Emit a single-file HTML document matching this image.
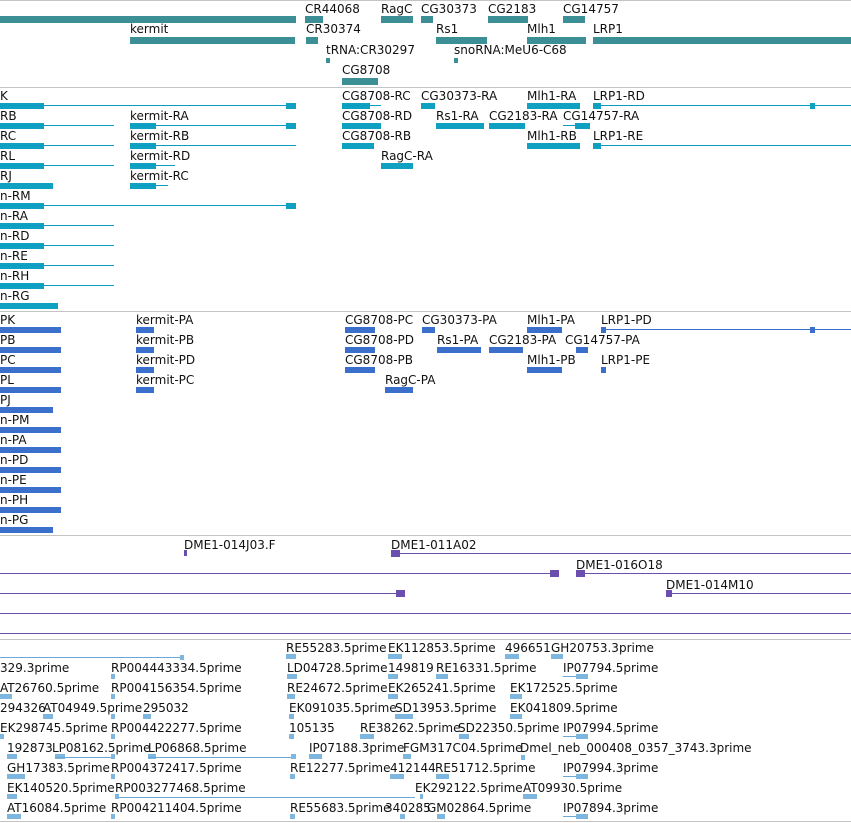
<!DOCTYPE html>
<html><head><meta charset="utf-8"><style>
body{margin:0;width:851px;height:823px;background:#fff;position:relative;overflow:hidden;font-family:"DejaVu Sans","Liberation Sans",sans-serif}
.t{position:absolute;font-size:12px;line-height:14px;color:#111;white-space:nowrap}
.s{position:absolute;left:0;width:851px;height:1px;background:#c4c4c4}
.g{position:absolute;height:7px;background:#3d8f96}
.a{position:absolute;height:6px;background:#0fa0c2}
.al{position:absolute;height:1px;background:#0a9cc0}
.p{position:absolute;height:6px;background:#3a6fcc}
.pl{position:absolute;height:1px;background:#3a6fcc}
.c{position:absolute;height:1px;background:#6a4fae}
.ca{position:absolute;height:7px;width:9px;background:#6a4fae}
.e{position:absolute;height:5px;background:#7db6de}
.el{position:absolute;height:1px;background:#6aa8d8}
</style></head><body>
<div class="s" style="top:0"></div><div class="s" style="top:87px"></div><div class="s" style="top:311px"></div><div class="s" style="top:535px"></div><div class="s" style="top:639px"></div><div class="s" style="top:821px"></div>

<div class="g" style="left:0;top:16px;width:296px"></div>
<div class="t" style="left:305px;top:2px">CR44068</div><div class="g" style="left:305px;top:16px;width:18px"></div>
<div class="t" style="left:381px;top:2px">RagC</div><div class="g" style="left:381px;top:16px;width:32px"></div>
<div class="t" style="left:421px;top:2px">CG30373</div><div class="g" style="left:421px;top:16px;width:12px"></div>
<div class="t" style="left:488px;top:2px">CG2183</div><div class="g" style="left:488px;top:16px;width:40px"></div>
<div class="t" style="left:563px;top:2px">CG14757</div><div class="g" style="left:563px;top:16px;width:22px"></div>
<div class="t" style="left:130px;top:22px">kermit</div><div class="g" style="left:130px;top:37px;width:165px"></div>
<div class="t" style="left:306px;top:22px">CR30374</div><div class="g" style="left:306px;top:37px;width:12px"></div>
<div class="t" style="left:436px;top:22px">Rs1</div><div class="g" style="left:436px;top:37px;width:51px"></div>
<div class="t" style="left:527px;top:22px">Mlh1</div><div class="g" style="left:527px;top:37px;width:59px"></div>
<div class="t" style="left:593px;top:22px">LRP1</div><div class="g" style="left:593px;top:37px;width:258px"></div>
<div class="t" style="left:326px;top:43px">tRNA:CR30297</div><div class="g" style="left:326px;top:58px;width:4px;height:5px"></div>
<div class="t" style="left:454px;top:43px">snoRNA:MeU6-C68</div><div class="g" style="left:454px;top:58px;width:4px;height:5px"></div>
<div class="t" style="left:342px;top:63px">CG8708</div><div class="g" style="left:342px;top:78px;width:36px"></div>

<div class="t" style="left:0;top:89px">K</div><div class="a" style="left:0;top:103px;width:44px"></div><div class="al" style="left:0;top:105px;width:295px"></div><div class="a" style="left:286px;top:103px;width:10px"></div>
<div class="t" style="left:0;top:109px">RB</div><div class="a" style="left:0;top:123px;width:44px"></div><div class="al" style="left:0;top:125px;width:114px"></div>
<div class="t" style="left:0;top:129px">RC</div><div class="a" style="left:0;top:143px;width:44px"></div><div class="al" style="left:0;top:145px;width:114px"></div>
<div class="t" style="left:0;top:149px">RL</div><div class="a" style="left:0;top:163px;width:44px"></div><div class="al" style="left:0;top:165px;width:114px"></div>
<div class="t" style="left:0;top:169px">RJ</div><div class="a" style="left:0;top:183px;width:53px"></div>
<div class="t" style="left:0;top:189px">n-RM</div><div class="a" style="left:0;top:203px;width:44px"></div><div class="al" style="left:0;top:205px;width:295px"></div><div class="a" style="left:286px;top:203px;width:10px"></div>
<div class="t" style="left:0;top:209px">n-RA</div><div class="a" style="left:0;top:223px;width:44px"></div><div class="al" style="left:0;top:225px;width:114px"></div>
<div class="t" style="left:0;top:229px">n-RD</div><div class="a" style="left:0;top:243px;width:44px"></div><div class="al" style="left:0;top:245px;width:114px"></div>
<div class="t" style="left:0;top:249px">n-RE</div><div class="a" style="left:0;top:263px;width:44px"></div><div class="al" style="left:0;top:265px;width:114px"></div>
<div class="t" style="left:0;top:269px">n-RH</div><div class="a" style="left:0;top:283px;width:44px"></div><div class="al" style="left:0;top:285px;width:114px"></div>
<div class="t" style="left:0;top:289px">n-RG</div><div class="a" style="left:0;top:303px;width:58px"></div>
<div class="t" style="left:130px;top:109px">kermit-RA</div><div class="a" style="left:130px;top:123px;width:26px"></div><div class="al" style="left:130px;top:125px;width:165px"></div><div class="a" style="left:286px;top:123px;width:10px"></div>
<div class="t" style="left:130px;top:129px">kermit-RB</div><div class="a" style="left:130px;top:143px;width:26px"></div><div class="al" style="left:130px;top:145px;width:166px"></div>
<div class="t" style="left:130px;top:149px">kermit-RD</div><div class="a" style="left:130px;top:163px;width:26px"></div><div class="al" style="left:130px;top:165px;width:45px"></div>
<div class="t" style="left:130px;top:169px">kermit-RC</div><div class="a" style="left:130px;top:183px;width:26px"></div><div class="al" style="left:130px;top:185px;width:38px"></div>
<div class="t" style="left:342px;top:89px">CG8708-RC</div><div class="a" style="left:342px;top:103px;width:28px"></div><div class="al" style="left:342px;top:105px;width:39px"></div>
<div class="t" style="left:421px;top:89px">CG30373-RA</div><div class="a" style="left:421px;top:103px;width:14px"></div>
<div class="t" style="left:527px;top:89px">Mlh1-RA</div><div class="a" style="left:527px;top:103px;width:53px"></div>
<div class="t" style="left:593px;top:89px">LRP1-RD</div><div class="a" style="left:593px;top:103px;width:8px"></div><div class="al" style="left:593px;top:105px;width:258px"></div><div class="a" style="left:810px;top:103px;width:5px"></div>
<div class="t" style="left:342px;top:109px">CG8708-RD</div><div class="a" style="left:342px;top:123px;width:39px"></div>
<div class="t" style="left:436px;top:109px">Rs1-RA</div><div class="a" style="left:436px;top:123px;width:48px"></div>
<div class="t" style="left:489px;top:109px">CG2183-RA</div><div class="a" style="left:489px;top:123px;width:36px"></div>
<div class="t" style="left:563px;top:109px">CG14757-RA</div><div class="al" style="left:563px;top:125px;width:27px"></div><div class="a" style="left:575px;top:123px;width:15px"></div>
<div class="t" style="left:342px;top:129px">CG8708-RB</div><div class="a" style="left:342px;top:143px;width:32px"></div>
<div class="t" style="left:527px;top:129px">Mlh1-RB</div><div class="a" style="left:527px;top:143px;width:53px"></div>
<div class="t" style="left:593px;top:129px">LRP1-RE</div><div class="a" style="left:593px;top:143px;width:8px"></div><div class="al" style="left:593px;top:145px;width:258px"></div>
<div class="t" style="left:381px;top:149px">RagC-RA</div><div class="a" style="left:381px;top:163px;width:32px"></div>

<div class="t" style="left:0;top:313px">PK</div><div class="p" style="left:0;top:327px;width:61px"></div>
<div class="t" style="left:0;top:333px">PB</div><div class="p" style="left:0;top:347px;width:61px"></div>
<div class="t" style="left:0;top:353px">PC</div><div class="p" style="left:0;top:367px;width:61px"></div>
<div class="t" style="left:0;top:373px">PL</div><div class="p" style="left:0;top:387px;width:61px"></div>
<div class="t" style="left:0;top:393px">PJ</div><div class="p" style="left:0;top:407px;width:53px"></div>
<div class="t" style="left:0;top:413px">n-PM</div><div class="p" style="left:0;top:427px;width:61px"></div>
<div class="t" style="left:0;top:433px">n-PA</div><div class="p" style="left:0;top:447px;width:61px"></div>
<div class="t" style="left:0;top:453px">n-PD</div><div class="p" style="left:0;top:467px;width:61px"></div>
<div class="t" style="left:0;top:473px">n-PE</div><div class="p" style="left:0;top:487px;width:61px"></div>
<div class="t" style="left:0;top:493px">n-PH</div><div class="p" style="left:0;top:507px;width:61px"></div>
<div class="t" style="left:0;top:513px">n-PG</div><div class="p" style="left:0;top:527px;width:53px"></div>
<div class="t" style="left:136px;top:313px">kermit-PA</div><div class="p" style="left:136px;top:327px;width:18px"></div>
<div class="t" style="left:136px;top:333px">kermit-PB</div><div class="p" style="left:136px;top:347px;width:18px"></div>
<div class="t" style="left:136px;top:353px">kermit-PD</div><div class="p" style="left:136px;top:367px;width:18px"></div>
<div class="t" style="left:136px;top:373px">kermit-PC</div><div class="p" style="left:136px;top:387px;width:18px"></div>
<div class="t" style="left:345px;top:313px">CG8708-PC</div><div class="p" style="left:345px;top:327px;width:30px"></div>
<div class="t" style="left:422px;top:313px">CG30373-PA</div><div class="p" style="left:422px;top:327px;width:13px"></div>
<div class="t" style="left:527px;top:313px">Mlh1-PA</div><div class="p" style="left:527px;top:327px;width:35px"></div>
<div class="t" style="left:601px;top:313px">LRP1-PD</div><div class="p" style="left:601px;top:327px;width:5px"></div><div class="pl" style="left:601px;top:329px;width:250px"></div><div class="p" style="left:810px;top:327px;width:5px"></div>
<div class="t" style="left:345px;top:333px">CG8708-PD</div><div class="p" style="left:345px;top:347px;width:30px"></div>
<div class="t" style="left:437px;top:333px">Rs1-PA</div><div class="p" style="left:437px;top:347px;width:44px"></div>
<div class="t" style="left:489px;top:333px">CG2183-PA</div><div class="p" style="left:489px;top:347px;width:34px"></div>
<div class="t" style="left:565px;top:333px">CG14757-PA</div><div class="p" style="left:576px;top:347px;width:12px"></div>
<div class="t" style="left:345px;top:353px">CG8708-PB</div><div class="p" style="left:345px;top:367px;width:30px"></div>
<div class="t" style="left:527px;top:353px">Mlh1-PB</div><div class="p" style="left:527px;top:367px;width:35px"></div>
<div class="t" style="left:601px;top:353px">LRP1-PE</div><div class="p" style="left:601px;top:367px;width:5px"></div>
<div class="t" style="left:385px;top:373px">RagC-PA</div><div class="p" style="left:385px;top:387px;width:28px"></div>

<div class="t" style="left:184px;top:538px">DME1-014J03.F</div><div class="c" style="left:184px;top:550px;width:3px;height:6px"></div>
<div class="t" style="left:391px;top:538px">DME1-011A02</div><div class="ca" style="left:391px;top:550px"></div><div class="c" style="left:391px;top:553px;width:460px"></div>
<div class="c" style="left:0;top:573px;width:555px"></div><div class="ca" style="left:550px;top:570px"></div>
<div class="t" style="left:576px;top:558px">DME1-016O18</div><div class="ca" style="left:576px;top:570px"></div><div class="c" style="left:576px;top:573px;width:275px"></div>
<div class="c" style="left:0;top:593px;width:404px"></div><div class="ca" style="left:396px;top:590px"></div>
<div class="t" style="left:666px;top:578px">DME1-014M10</div><div class="ca" style="left:666px;top:590px;width:6px"></div><div class="c" style="left:666px;top:593px;width:185px"></div>
<div class="c" style="left:0;top:613px;width:851px"></div>
<div class="c" style="left:0;top:633px;width:851px"></div>

<div class="el" style="left:0;top:657px;width:183px"></div><div class="e" style="left:180px;top:655px;width:4px"></div>
<div class="t" style="left:286px;top:641px">RE55283.5prime</div><div class="e" style="left:286px;top:654px;width:10px"></div>
<div class="t" style="left:388px;top:641px">EK112853.5prime</div><div class="e" style="left:388px;top:654px;width:14px"></div>
<div class="t" style="left:505px;top:641px">496651</div><div class="e" style="left:505px;top:654px;width:14px"></div>
<div class="t" style="left:551px;top:641px">GH20753.3prime</div><div class="e" style="left:551px;top:654px;width:12px"></div>

<div class="t" style="left:0;top:661px">329.3prime</div>
<div class="t" style="left:111px;top:661px">RP004443334.5prime</div><div class="e" style="left:111px;top:674px;width:4px"></div>
<div class="t" style="left:287px;top:661px">LD04728.5prime</div><div class="e" style="left:287px;top:674px;width:10px"></div>
<div class="t" style="left:388px;top:661px">149819</div><div class="e" style="left:388px;top:674px;width:10px"></div>
<div class="t" style="left:436px;top:661px">RE16331.5prime</div><div class="e" style="left:436px;top:674px;width:12px"></div>
<div class="t" style="left:563px;top:661px">IP07794.5prime</div><div class="el" style="left:563px;top:676px;width:25px"></div><div class="e" style="left:576px;top:674px;width:12px"></div>

<div class="t" style="left:0;top:681px">AT26760.5prime</div><div class="e" style="left:0;top:694px;width:12px"></div>
<div class="t" style="left:111px;top:681px">RP004156354.5prime</div><div class="e" style="left:111px;top:694px;width:4px"></div>
<div class="t" style="left:287px;top:681px">RE24672.5prime</div><div class="e" style="left:287px;top:694px;width:8px"></div>
<div class="t" style="left:388px;top:681px">EK265241.5prime</div><div class="e" style="left:388px;top:694px;width:10px"></div>
<div class="t" style="left:510px;top:681px">EK172525.5prime</div><div class="e" style="left:510px;top:694px;width:12px"></div>

<div class="t" style="left:0;top:701px">294326</div><div class="t" style="left:43px;top:701px">AT04949.5prime</div><div class="t" style="left:143px;top:701px">295032</div>
<div class="e" style="left:43px;top:714px;width:10px"></div><div class="e" style="left:143px;top:714px;width:8px"></div><div class="e" style="left:111px;top:714px;width:4px"></div>
<div class="t" style="left:289px;top:701px">EK091035.5prime</div><div class="e" style="left:289px;top:714px;width:5px"></div>
<div class="t" style="left:395px;top:701px">SD13953.5prime</div><div class="e" style="left:395px;top:714px;width:18px"></div>
<div class="t" style="left:510px;top:701px">EK041809.5prime</div><div class="e" style="left:510px;top:714px;width:12px"></div>

<div class="t" style="left:0;top:721px">EK298745.5prime</div><div class="e" style="left:0;top:734px;width:4px"></div>
<div class="t" style="left:111px;top:721px">RP004422277.5prime</div><div class="e" style="left:111px;top:734px;width:4px"></div>
<div class="t" style="left:289px;top:721px">105135</div><div class="e" style="left:289px;top:734px;width:5px"></div>
<div class="t" style="left:360px;top:721px">RE38262.5prime</div><div class="e" style="left:360px;top:734px;width:14px"></div>
<div class="t" style="left:458px;top:721px">SD22350.5prime</div><div class="e" style="left:459px;top:734px;width:10px"></div>
<div class="t" style="left:563px;top:721px">IP07994.5prime</div><div class="el" style="left:563px;top:736px;width:25px"></div><div class="e" style="left:576px;top:734px;width:12px"></div>

<div class="t" style="left:7px;top:741px">192873</div><div class="e" style="left:7px;top:754px;width:10px"></div>
<div class="t" style="left:52px;top:741px">LP08162.5prime</div><div class="e" style="left:55px;top:754px;width:10px"></div><div class="el" style="left:55px;top:757px;width:60px"></div><div class="e" style="left:111px;top:754px;width:4px"></div>
<div class="t" style="left:148px;top:741px">LP06868.5prime</div><div class="e" style="left:148px;top:754px;width:8px"></div><div class="el" style="left:148px;top:757px;width:147px"></div><div class="e" style="left:291px;top:754px;width:5px"></div>
<div class="t" style="left:309px;top:741px">IP07188.3prime</div><div class="e" style="left:309px;top:754px;width:13px"></div>
<div class="t" style="left:403px;top:741px">FGM317C04.5prime</div><div class="e" style="left:403px;top:754px;width:8px"></div>
<div class="t" style="left:520px;top:741px">Dmel_neb_000408_0357_3743.3prime</div><div class="e" style="left:521px;top:755px;width:4px"></div>

<div class="t" style="left:7px;top:761px">GH17383.5prime</div><div class="e" style="left:7px;top:774px;width:18px"></div>
<div class="t" style="left:111px;top:761px">RP004372417.5prime</div><div class="e" style="left:111px;top:774px;width:4px"></div>
<div class="t" style="left:290px;top:761px">RE12277.5prime</div><div class="e" style="left:290px;top:774px;width:5px"></div>
<div class="t" style="left:390px;top:761px">412144</div><div class="e" style="left:390px;top:774px;width:14px"></div>
<div class="t" style="left:435px;top:761px">RE51712.5prime</div><div class="e" style="left:436px;top:774px;width:13px"></div>
<div class="t" style="left:563px;top:761px">IP07994.3prime</div><div class="el" style="left:563px;top:776px;width:25px"></div><div class="e" style="left:576px;top:774px;width:12px"></div>

<div class="t" style="left:7px;top:781px">EK140520.5prime</div><div class="e" style="left:7px;top:794px;width:10px"></div>
<div class="t" style="left:115px;top:781px">RP003277468.5prime</div><div class="el" style="left:115px;top:797px;width:300px"></div><div class="e" style="left:115px;top:794px;width:4px"></div>
<div class="t" style="left:415px;top:781px">EK292122.5prime</div><div class="e" style="left:420px;top:794px;width:3px"></div>
<div class="t" style="left:523px;top:781px">AT09930.5prime</div><div class="e" style="left:523px;top:794px;width:14px"></div>

<div class="t" style="left:7px;top:801px">AT16084.5prime</div><div class="e" style="left:7px;top:814px;width:14px"></div>
<div class="t" style="left:111px;top:801px">RP004211404.5prime</div><div class="e" style="left:111px;top:814px;width:4px"></div>
<div class="t" style="left:290px;top:801px">RE55683.5prime</div><div class="e" style="left:290px;top:814px;width:5px"></div>
<div class="t" style="left:385px;top:801px">340285</div><div class="e" style="left:400px;top:814px;width:5px"></div>
<div class="t" style="left:427px;top:801px">GM02864.5prime</div><div class="e" style="left:437px;top:814px;width:8px"></div>
<div class="t" style="left:563px;top:801px">IP07894.3prime</div><div class="el" style="left:563px;top:816px;width:25px"></div><div class="e" style="left:576px;top:814px;width:12px"></div>
</body></html>
